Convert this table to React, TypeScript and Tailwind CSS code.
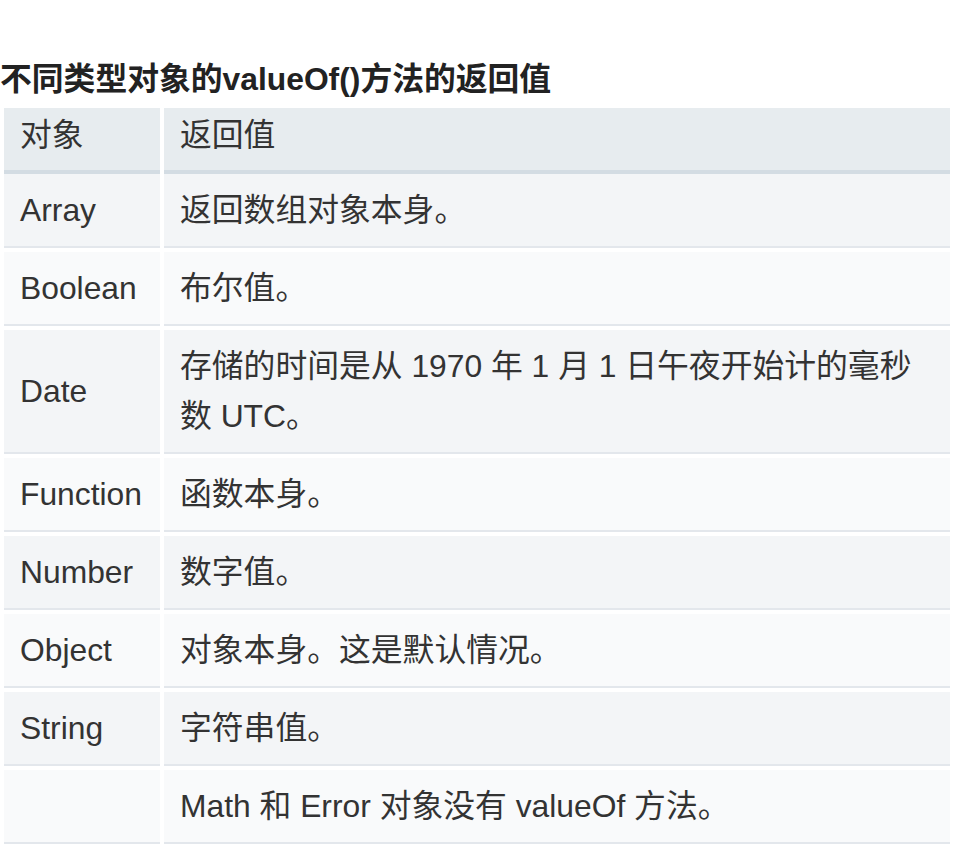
import React from "react";

const rows: { name: string; value: string }[] = [
  { name: "Array", value: "返回数组对象本身。" },
  { name: "Boolean", value: "布尔值。" },
  { name: "Date", value: "存储的时间是从 1970 年 1 月 1 日午夜开始计的毫秒数 UTC。" },
  { name: "Function", value: "函数本身。" },
  { name: "Number", value: "数字值。" },
  { name: "Object", value: "对象本身。这是默认情况。" },
  { name: "String", value: "字符串值。" },
  { name: "", value: "Math 和 Error 对象没有 valueOf 方法。" },
];

export default function App() {
  return (
    <div className="w-[960px] h-[856px] bg-white pt-[54px] font-['Liberation_Sans','Noto_Sans_CJK_SC',sans-serif] text-[#333] overflow-hidden">
      <h1 className="text-[31.8px] leading-[50px] font-bold text-[#222] mb-[4px]">
        不同类型对象的valueOf()方法的返回值
      </h1>
      <div className="ml-[4px] w-[946px] flex flex-col text-[31.8px] leading-[50px]">
        <div className="flex gap-[4px]">
          <div className="w-[156px] shrink-0 bg-[#e7ecef] border-b-4 border-[#d3dce3] pl-[16px] pt-[2px] pb-[10px]">
            对象
          </div>
          <div className="flex-1 bg-[#e7ecef] border-b-4 border-[#d3dce3] pl-[16px] pt-[2px] pb-[10px]">
            返回值
          </div>
        </div>
        {rows.map((r, i) => {
          const bg = i % 2 === 0 ? "bg-[#f3f5f7]" : "bg-[#f9fafb]";
          return (
            <div key={i} className="flex gap-[4px] mb-[4px]">
              <div className={`w-[156px] shrink-0 ${bg} border-b-2 border-[#e3e7ec] pl-[16px] py-[11px] flex items-center`}>
                {r.name}
              </div>
              <div className={`flex-1 ${bg} border-b-2 border-[#e3e7ec] pl-[16px] pr-[16px] py-[11px] flex items-center`}>
                <span>{r.value}</span>
              </div>
            </div>
          );
        })}
      </div>
    </div>
  );
}
